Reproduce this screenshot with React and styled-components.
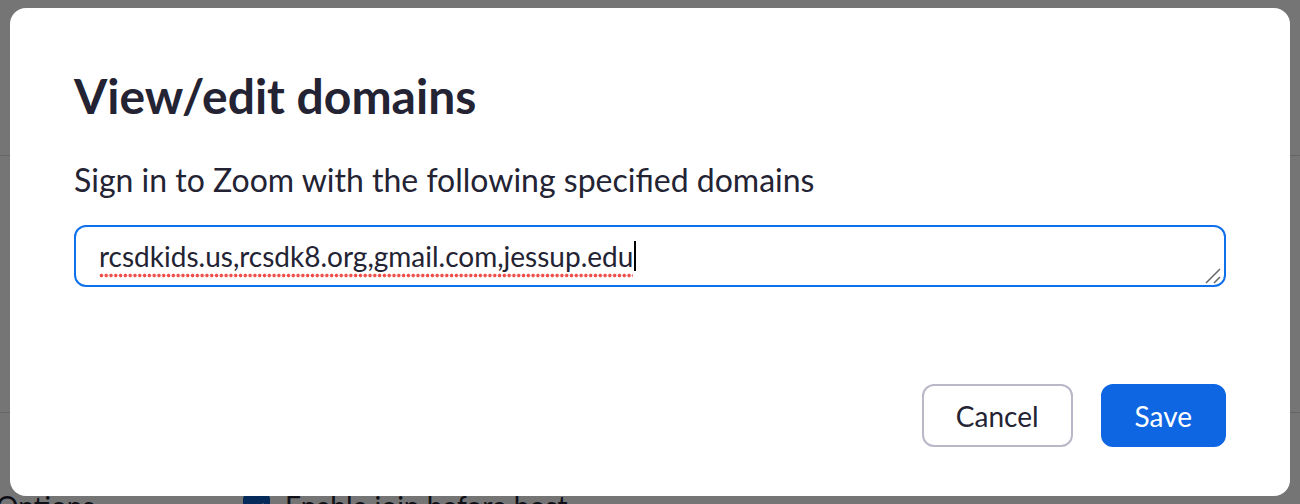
import React from "react";
import styled, { createGlobalStyle } from "styled-components";

const Global = createGlobalStyle`
  html, body { margin: 0; padding: 0; background: #fff; }
  body { font-family: Lato, "Noto Sans", sans-serif; color: #232333; overflow: hidden; }
  * { box-sizing: border-box; }
`;

const Page = styled.div`
  width: 1300px;
  height: 504px;
  overflow: hidden;
  background: #fff;
  display: flex;
  flex-direction: column;
`;

const Section = styled.div`
  height: ${(p) => p.$h}px;
  border-bottom: ${(p) => (p.$line ? "1px solid #dcdcdc" : "none")};
  flex: none;
`;

const OptionRow = styled.div`
  display: flex;
  align-items: flex-start;
  height: 40px;
  flex: none;
`;

const OptionLabel = styled.div`
  width: 247px;
  margin-left: -4px;
  margin-top: -4px;
  font-size: 28px;
  line-height: 34px;
  color: #232333;
  flex: none;
`;

const Check = styled.div`
  width: 27px;
  height: 27px;
  margin-top: 2px;
  border-radius: 4px;
  background: #0e5ec4;
  flex: none;
  display: flex;
  align-items: center;
  justify-content: center;
`;

const OptionText = styled.div`
  margin-left: 15px;
  margin-top: -4px;
  font-size: 28px;
  line-height: 34px;
  color: #232333;
`;

const Overlay = styled.div`
  position: fixed;
  inset: 0;
  background: rgba(0, 0, 0, 0.54);
  display: flex;
  align-items: center;
  justify-content: center;
`;

const Modal = styled.div`
  width: 1280px;
  height: 488px;
  background: #fff;
  border-radius: 16px;
  padding: 59px 64px 49px;
  display: flex;
  flex-direction: column;
`;

const Title = styled.h2`
  margin: 0;
  font-size: 48px;
  line-height: 58px;
  font-weight: 700;
  color: #232333;
`;

const Label = styled.p`
  margin: 36px 0 0;
  font-size: 32px;
  line-height: 38px;
  color: #232333;
`;

const Field = styled.div`
  position: relative;
  margin-top: 26px;
  height: 62px;
  flex: none;
  border: 2px solid #0e71eb;
  border-radius: 12px;
  padding: 0 23px;
  display: flex;
  align-items: center;
  font-size: 28px;
  color: #232333;
`;

const Value = styled.span`
  display: inline-block;
  line-height: 34px;
  margin-top: 6px;
  padding-bottom: 6px;
  background-image: radial-gradient(circle, #f0504c 1.6px, rgba(240, 80, 76, 0) 2.1px);
  background-size: 4.8px 4.8px;
  background-repeat: repeat-x;
  background-position: 0 calc(100% - 1px);
`;

const Caret = styled.span`
  display: inline-block;
  width: 2px;
  height: 30px;
  background: #000;
  margin-left: 1px;
`;

const Grip = styled.svg`
  position: absolute;
  right: 3px;
  bottom: 1px;
`;

const Footer = styled.div`
  margin-top: auto;
  display: flex;
  justify-content: flex-end;
  gap: 28px;
`;

const Button = styled.button`
  height: 63px;
  padding: 0 32px;
  border-radius: 12px;
  font-family: inherit;
  font-size: 28px;
  border: 2px solid ${(p) => (p.$primary ? "#0e66e3" : "#b9b8c8")};
  background: ${(p) => (p.$primary ? "#0e66e3" : "#fff")};
  color: ${(p) => (p.$primary ? "#fff" : "#232333")};
  cursor: pointer;
`;

export default function App() {
  return (
    <>
      <Global />
      <Page>
        <Section $h={156} $line />
        <Section $h={257} $line />
        <Section $h={80} />
        <OptionRow>
          <OptionLabel>Options</OptionLabel>
          <Check>
            <svg width="18" height="14" viewBox="0 0 18 14">
              <path d="M2 7l5 5 9-10" stroke="#fff" strokeWidth="3" fill="none" />
            </svg>
          </Check>
          <OptionText>Enable join before host</OptionText>
        </OptionRow>
      </Page>
      <Overlay>
        <Modal role="dialog">
          <Title>View/edit domains</Title>
          <Label>Sign in to Zoom with the following specified domains</Label>
          <Field>
            <Value>rcsdkids.us,rcsdk8.org,gmail.com,jessup.edu</Value>
            <Caret />
            <Grip width="16" height="16" viewBox="0 0 16 16">
              <path d="M1 15L15 1M9 15L15 9" stroke="#666" strokeWidth="1.5" />
            </Grip>
          </Field>
          <Footer>
            <Button>Cancel</Button>
            <Button $primary>Save</Button>
          </Footer>
        </Modal>
      </Overlay>
    </>
  );
}
